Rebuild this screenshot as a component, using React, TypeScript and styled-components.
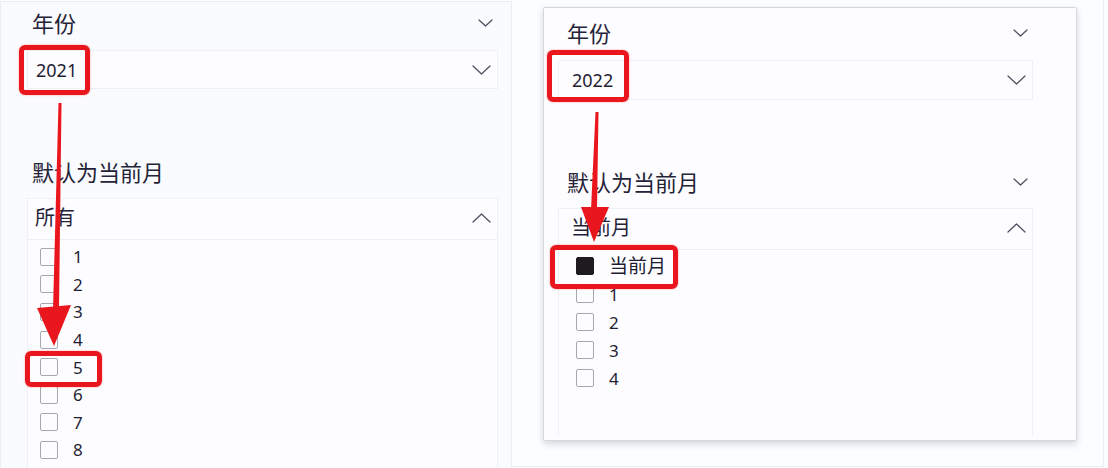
import React from 'react'
import styled, { createGlobalStyle } from 'styled-components'

const GlobalStyle = createGlobalStyle`
  html, body {
    margin: 0;
    padding: 0;
    background: #fcfdff;
  }
  body {
    font-family: 'Segoe UI', 'Noto Sans', 'Noto Sans CJK SC', sans-serif;
    color: #252338;
  }
  * {
    box-sizing: border-box;
  }
`

type Mark = { left: number; top: number; width: number; height: number }

interface Item {
  label: string
  checked?: boolean
  mark?: Mark
}

interface Variant {
  titleIndent: number
  dropHeight: number
  dropIndent: number
  secondGap: number
  headIndent: number
  itemIndent: number
  itemTop: number
  rowHeight: number
}

const leftVariant: Variant = {
  titleIndent: 5,
  dropHeight: 39,
  dropIndent: 8,
  secondGap: 67,
  headIndent: 7,
  itemIndent: 12,
  itemTop: 3,
  rowHeight: 27.6
}

const rightVariant: Variant = {
  titleIndent: 9,
  dropHeight: 40,
  dropIndent: 13,
  secondGap: 66,
  headIndent: 12,
  itemIndent: 17,
  itemTop: 2,
  rowHeight: 28
}

const Chevron = ({ up, width = 16, height = 9 }: { up?: boolean; width?: number; height?: number }) => (
  <svg width={width} height={height} viewBox={`0 0 ${width} ${height}`} fill="none">
    <polyline
      points={
        up
          ? `1,${height - 1} ${width / 2},1 ${width - 1},${height - 1}`
          : `1,1 ${width / 2},${height - 1} ${width - 1},1`
      }
      stroke="#4f4d5e"
      strokeWidth={1.25}
      strokeLinecap="round"
      strokeLinejoin="round"
    />
  </svg>
)

const Filter = ({
  v,
  year,
  yearMark,
  secondChevron,
  listTitle,
  items
}: {
  v: Variant
  year: string
  yearMark: Mark
  secondChevron: boolean
  listTitle: string
  items: Item[]
}) => (
  <>
    <TitleRow $indent={v.titleIndent}>
      <TitleText>年份</TitleText>
      <Chevron width={15} height={8} />
    </TitleRow>
    <Dropdown $height={v.dropHeight} $indent={v.dropIndent}>
      <ValueText>{year}</ValueText>
      <Chevron width={19} height={10} />
      <Highlight $m={yearMark} />
    </Dropdown>
    <TitleRow $indent={v.titleIndent} $gap={v.secondGap}>
      <TitleText>默认为当前月</TitleText>
      {secondChevron && <Chevron width={15} height={8} />}
    </TitleRow>
    <ListBox>
      <ListHeader $indent={v.headIndent}>
        <HeaderText>{listTitle}</HeaderText>
        <Chevron up width={19} height={10} />
      </ListHeader>
      <Items $indent={v.itemIndent} $top={v.itemTop}>
        {items.map((it) => (
          <ItemRow key={it.label} $height={v.rowHeight}>
            <Checkbox $checked={it.checked} />
            <ItemLabel $cjk={it.checked}>{it.label}</ItemLabel>
            {it.mark && <Highlight $m={it.mark} />}
          </ItemRow>
        ))}
      </Items>
    </ListBox>
  </>
)

const App = () => {
  const months = ['1', '2', '3', '4', '5', '6', '7', '8']
  const leftItems: Item[] = months.map((m) =>
    m === '5' ? { label: m, mark: { left: -15, top: -2.4, width: 77, height: 36 } } : { label: m }
  )
  const rightItems: Item[] = [
    { label: '当前月', checked: true, mark: { left: -26, top: -7, width: 128, height: 44 } },
    { label: '1' },
    { label: '2' },
    { label: '3' },
    { label: '4' }
  ]

  return (
    <Page>
      <GlobalStyle />
      <LeftPanel>
        <Filter
          v={leftVariant}
          year="2021"
          yearMark={{ left: -9, top: -6, width: 71, height: 50 }}
          secondChevron={false}
          listTitle="所有"
          items={leftItems}
        />
      </LeftPanel>
      <RightArea>
        <Card>
          <Filter
            v={rightVariant}
            year="2022"
            yearMark={{ left: -12, top: -11, width: 82, height: 52 }}
            secondChevron
            listTitle="当前月"
            items={rightItems}
          />
        </Card>
      </RightArea>
      <Annotations width={1108} height={468} viewBox="0 0 1108 468">
        <polygon points="58.5,103 61.5,103 59,310 53,310" fill="#ea161d" />
        <polygon points="37,308 71,305 54,346" fill="#ea161d" />
        <polygon points="595.5,112 598.5,112 597,210 591,210" fill="#ea161d" />
        <polygon points="581,207 609,207 594,242" fill="#ea161d" />
      </Annotations>
    </Page>
  )
}

const Page = styled.div`
  position: relative;
  display: flex;
  width: 1108px;
  height: 468px;
  overflow: hidden;
  background: #fcfdff;
`

const LeftPanel = styled.div`
  width: 512px;
  height: 467px;
  margin-top: 1px;
  display: flex;
  flex-direction: column;
  padding: 5px 13px 0 26px;
  border: 1px solid #eceef3;
  border-bottom: none;
  background: #fafbfe;
`

const RightArea = styled.div`
  width: 592px;
  height: 467px;
  padding: 7px 0 0 31px;
  border-right: 1px solid #eceef3;
  border-bottom: 1px solid #eceef3;
`

const Card = styled.div`
  width: 534px;
  height: 434px;
  display: flex;
  flex-direction: column;
  padding: 9px 43px 5px 14px;
  background: #fdfdff;
  border: 1px solid #d6d8de;
  border-radius: 2px;
  box-shadow: 0 3px 7px rgba(40, 40, 60, 0.18);
`

const TitleRow = styled.div<{ $indent: number; $gap?: number }>`
  height: 32px;
  flex-shrink: 0;
  display: flex;
  align-items: center;
  justify-content: space-between;
  margin-top: ${(p) => p.$gap ?? 0}px;
  padding: 0 5px 0 ${(p) => p.$indent}px;
`

const TitleText = styled.span`
  font-size: 22px;
  line-height: 1;
  color: #252338;
`

const Dropdown = styled.div<{ $height: number; $indent: number }>`
  position: relative;
  height: ${(p) => p.$height}px;
  flex-shrink: 0;
  margin-top: 11px;
  display: flex;
  align-items: center;
  justify-content: space-between;
  padding: 0 6px 0 ${(p) => p.$indent}px;
  border: 1px solid #eef0f5;
  background: #fdfdff;
`

const ValueText = styled.span`
  font-size: 18px;
  line-height: 1;
  color: #1f1c33;
`

const Highlight = styled.span<{ $m: Mark }>`
  position: absolute;
  left: ${(p) => p.$m.left}px;
  top: ${(p) => p.$m.top}px;
  width: ${(p) => p.$m.width}px;
  height: ${(p) => p.$m.height}px;
  border: 5px solid #ea161d;
  border-radius: 6px;
  box-shadow: 0 0 2px rgba(234, 22, 29, 0.45);
  z-index: 2;
  pointer-events: none;
`

const ListBox = styled.div`
  flex: 1;
  margin-top: 10px;
  display: flex;
  flex-direction: column;
  border: 1px solid #eef0f5;
  border-bottom: none;
  background: #fdfdff;
`

const ListHeader = styled.div<{ $indent: number }>`
  height: 41px;
  flex-shrink: 0;
  display: flex;
  align-items: center;
  justify-content: space-between;
  padding: 0 6px 2px ${(p) => p.$indent}px;
  border-bottom: 1px solid #eceff4;
`

const HeaderText = styled.span`
  font-size: 20px;
  line-height: 1;
  color: #252338;
`

const Items = styled.div<{ $indent: number; $top: number }>`
  display: flex;
  flex-direction: column;
  padding: ${(p) => p.$top}px 0 0 ${(p) => p.$indent}px;
`

const ItemRow = styled.div<{ $height: number }>`
  position: relative;
  height: ${(p) => p.$height}px;
  display: flex;
  align-items: center;
  gap: 15px;
`

const Checkbox = styled.span<{ $checked?: boolean }>`
  width: 18px;
  height: 18px;
  flex-shrink: 0;
  border: 1px solid ${(p) => (p.$checked ? '#1d1b20' : '#a8a8b0')};
  border-radius: 2px;
  background: ${(p) => (p.$checked ? '#1d1b20' : 'transparent')};
`

const ItemLabel = styled.span<{ $cjk?: boolean }>`
  font-size: ${(p) => (p.$cjk ? 19 : 17)}px;
  line-height: 1;
  color: #1f1c33;
`

const Annotations = styled.svg`
  position: absolute;
  left: 0;
  top: 0;
  z-index: 3;
  pointer-events: none;
`

export default App
